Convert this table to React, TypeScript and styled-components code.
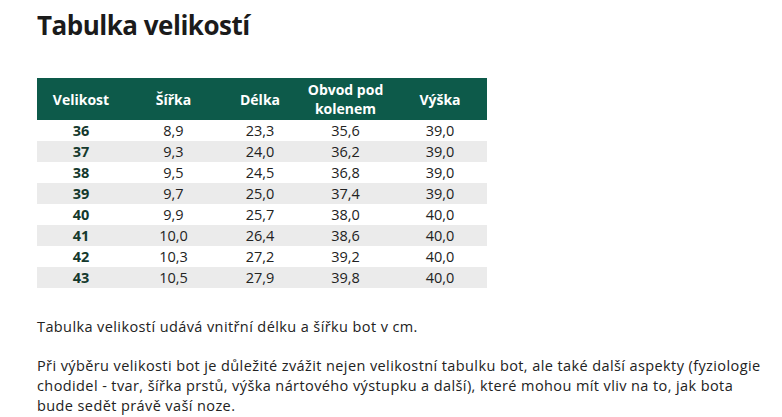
import React from "react";
import styled, { createGlobalStyle } from "styled-components";

const Global = createGlobalStyle`
  html, body { margin: 0; padding: 0; background: #fff; }
  body { font-family: "Open Sans", "Liberation Sans", sans-serif; color: #222; }
`;

const Page = styled.main`
  padding: 8px 8px 0 37px;
  display: flex;
  flex-direction: column;
`;

const Title = styled.h1`
  margin: 0;
  font-size: 26px;
  line-height: 34px;
  font-weight: 700;
  color: #1b1b1b;
  letter-spacing: -0.5px;
`;

const Table = styled.div`
  margin-top: 36px;
  display: grid;
  grid-template-columns: 88px 97px 76px 95px 94px;
  width: 450px;
`;

const HeadCell = styled.div`
  background: #0d5a4a;
  color: #fff;
  font-weight: 700;
  font-size: 14px;
  line-height: 19px;
  height: 42px;
  display: flex;
  align-items: center;
  justify-content: center;
  text-align: center;
`;

const Cell = styled.div<{ $alt: boolean; $first?: boolean }>`
  background: ${(p) => (p.$alt ? "#ebebeb" : "#fff")};
  height: 21px;
  display: flex;
  align-items: center;
  justify-content: center;
  font-size: 14.5px;
  font-weight: ${(p) => (p.$first ? 700 : 400)};
  color: ${(p) => (p.$first ? "#14392d" : "#222")};
`;

const Text = styled.p`
  margin: 0;
  font-size: 14.5px;
  line-height: 20px;
  color: #222;
  letter-spacing: 0.4px;
  max-width: 745px;
`;

const First = styled(Text)`
  margin-top: 29px;
`;

const Second = styled(Text)`
  margin-top: 19px;
`;

const headers = ["Velikost", "Šířka", "Délka", "Obvod pod kolenem", "Výška"];
const rows = [
  ["36", "8,9", "23,3", "35,6", "39,0"],
  ["37", "9,3", "24,0", "36,2", "39,0"],
  ["38", "9,5", "24,5", "36,8", "39,0"],
  ["39", "9,7", "25,0", "37,4", "39,0"],
  ["40", "9,9", "25,7", "38,0", "40,0"],
  ["41", "10,0", "26,4", "38,6", "40,0"],
  ["42", "10,3", "27,2", "39,2", "40,0"],
  ["43", "10,5", "27,9", "39,8", "40,0"],
];

export default function App() {
  return (
    <>
      <Global />
      <Page>
        <Title>Tabulka velikostí</Title>
        <Table>
          {headers.map((h) => (
            <HeadCell key={h}>{h === "Obvod pod kolenem" ? <span>Obvod pod<br />kolenem</span> : h}</HeadCell>
          ))}
          {rows.map((r, i) =>
            r.map((c, j) => (
              <Cell key={`${i}-${j}`} $alt={i % 2 === 1} $first={j === 0}>
                {c}
              </Cell>
            ))
          )}
        </Table>
        <First>Tabulka velikostí udává vnitřní délku a šířku bot v cm.</First>
        <Second>
          Při výběru velikosti bot je důležité zvážit nejen velikostní tabulku bot, ale také další aspekty (fyziologie
          chodidel - tvar, šířka prstů, výška nártového výstupku a další), které mohou mít vliv na to, jak bota
          <br />
          bude sedět právě vaší noze.
        </Second>
      </Page>
    </>
  );
}
